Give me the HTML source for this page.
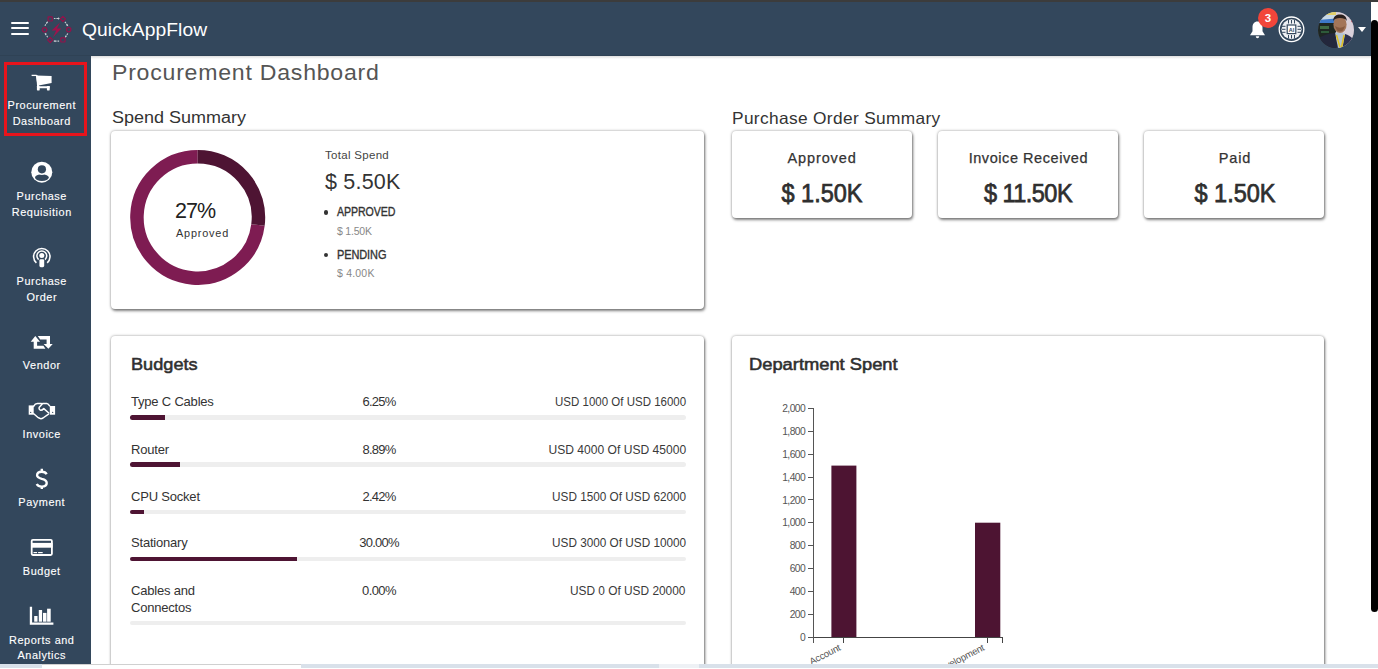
<!DOCTYPE html>
<html><head><meta charset="utf-8">
<style>
*{box-sizing:border-box;margin:0;padding:0}
html,body{width:1378px;height:669px;overflow:hidden;background:#fff;font-family:"Liberation Sans",sans-serif;position:relative}
.a{position:absolute}
.t{position:absolute;white-space:nowrap;line-height:1}
.card{position:absolute;background:#fff;border-radius:4px;box-shadow:0 0 3px rgba(0,0,0,.38),1px 2px 3px rgba(0,0,0,.45)}
svg{position:absolute;overflow:visible}
</style></head><body>
<div class="a" style="left:0;top:0;width:1378px;height:2px;background:#3c3c3c"></div>
<div class="a" style="left:0;top:2px;width:1371px;height:54px;background:#33475c;border-bottom:1px solid #2f4255"></div>
<div class="a" style="left:91px;top:56px;width:1280px;height:3px;background:linear-gradient(rgba(0,0,0,.13),rgba(0,0,0,0))"></div>
<div class="a" style="left:0;top:56px;width:91px;height:608px;background:#33475c"></div>
<div class="a" style="left:11px;top:21.7px;width:18.3px;height:2px;background:#fff;border-radius:1px"></div>
<div class="a" style="left:11px;top:27.3px;width:18.3px;height:2px;background:#fff;border-radius:1px"></div>
<div class="a" style="left:11px;top:33.2px;width:18.3px;height:2px;background:#fff;border-radius:1px"></div>
<div class="t" style="top:20.66px;font-size:18.5px;color:#fff;transform:scaleX(1.04);transform-origin:0 0;letter-spacing:0.1px;left:82px;">QuickAppFlow</div>
<div class="a" style="left:4px;top:62px;width:83px;height:74px;border:3px solid #e8141c"></div>
<div class="t" style="top:99.87px;font-size:10.9px;color:#fff;letter-spacing:0.55px;left:-3.73px;width:91px;text-align:center;-webkit-text-stroke:0.12px #fff;">Procurement</div>
<div class="t" style="top:116.37px;font-size:10.9px;color:#fff;letter-spacing:0.55px;left:-3.73px;width:91px;text-align:center;-webkit-text-stroke:0.12px #fff;">Dashboard</div>
<div class="t" style="top:190.57px;font-size:10.9px;color:#fff;letter-spacing:0.55px;left:-3.73px;width:91px;text-align:center;-webkit-text-stroke:0.12px #fff;">Purchase</div>
<div class="t" style="top:207.27px;font-size:10.9px;color:#fff;letter-spacing:0.55px;left:-3.73px;width:91px;text-align:center;-webkit-text-stroke:0.12px #fff;">Requisition</div>
<div class="t" style="top:275.57px;font-size:10.9px;color:#fff;letter-spacing:0.55px;left:-3.73px;width:91px;text-align:center;-webkit-text-stroke:0.12px #fff;">Purchase</div>
<div class="t" style="top:292.07px;font-size:10.9px;color:#fff;letter-spacing:0.55px;left:-3.73px;width:91px;text-align:center;-webkit-text-stroke:0.12px #fff;">Order</div>
<div class="t" style="top:360.07px;font-size:10.9px;color:#fff;letter-spacing:0.55px;left:-3.73px;width:91px;text-align:center;-webkit-text-stroke:0.12px #fff;">Vendor</div>
<div class="t" style="top:429.07px;font-size:10.9px;color:#fff;letter-spacing:0.55px;left:-3.73px;width:91px;text-align:center;-webkit-text-stroke:0.12px #fff;">Invoice</div>
<div class="t" style="top:497.27px;font-size:10.9px;color:#fff;letter-spacing:0.55px;left:-3.73px;width:91px;text-align:center;-webkit-text-stroke:0.12px #fff;">Payment</div>
<div class="t" style="top:565.87px;font-size:10.9px;color:#fff;letter-spacing:0.55px;left:-3.73px;width:91px;text-align:center;-webkit-text-stroke:0.12px #fff;">Budget</div>
<div class="t" style="top:634.57px;font-size:10.9px;color:#fff;letter-spacing:0.55px;left:-3.73px;width:91px;text-align:center;-webkit-text-stroke:0.12px #fff;">Reports and</div>
<div class="t" style="top:650.27px;font-size:10.9px;color:#fff;letter-spacing:0.55px;left:-3.73px;width:91px;text-align:center;-webkit-text-stroke:0.12px #fff;">Analytics</div>
<svg style="left:0;top:0" width="1378" height="669"><path d="M31.6 75.4H36.6" stroke="#fff" stroke-width="1.3" fill="none"/><path d="M36.3 75.6L51.6 76V82.9L38.6 85.5L37.9 86.3H49.7V88.2H37.2z" fill="#fff"/><path d="M36.6 75.2L38.4 86" stroke="#fff" stroke-width="1.6" fill="none"/><rect x="36.9" y="86" width="2.8" height="4.4" rx="0.6" fill="#fff"/><rect x="46.9" y="86" width="2.8" height="4.4" rx="0.6" fill="#fff"/><circle cx="41.8" cy="172.2" r="10.5" fill="#fff"/><ellipse cx="41.9" cy="177.6" rx="6.9" ry="3.3" fill="#33475c"/><circle cx="41.9" cy="169.3" r="5.6" fill="#fff"/><circle cx="41.9" cy="169.3" r="4.1" fill="#33475c"/><path d="M36.4 262.8A8.2 8.2 0 1 1 47.2 262.8" fill="none" stroke="#fff" stroke-width="1.6"/><path d="M38.6 259.6A4.9 4.9 0 1 1 45 259.6" fill="none" stroke="#fff" stroke-width="1.5"/><circle cx="41.8" cy="255.6" r="2.5" fill="#fff"/><rect x="39.4" y="259.2" width="4.8" height="8" rx="1.4" fill="#fff"/><path d="M30.7 341.7L35.3 335.9L40 341.7H37.1V345.8H43.4L45.4 348.8H33.7V341.7Z" fill="#fff"/><path d="M52.7 343.9L48.4 348.8L43.6 343.9H46.6V339.5H40.2L37.8 336.1H50V343.9Z" fill="#fff"/><rect x="28.7" y="405.4" width="5" height="9.3" fill="#fff"/><rect x="49.8" y="406" width="5.3" height="8.7" fill="#fff"/><circle cx="30.7" cy="412.4" r="0.6" fill="#33475c"/><circle cx="52.7" cy="412.4" r="0.6" fill="#33475c"/><g fill="none" stroke="#fff" stroke-width="1.5" stroke-linejoin="round" stroke-linecap="round"><path d="M33.6 406.4C34.6 404.6 35.6 403.6 37.4 403.6H41.4"/><path d="M42 404.2L39.3 407.2C38.7 408.2 39.2 409.9 40.6 410.2C41.6 410.4 42.6 409.8 43.8 408.6L48.8 413"/><path d="M41.6 403.8L43.2 403.5H46.8C47.9 403.5 48.6 404.3 49.6 405.8"/><path d="M33.7 413.8L38.3 417.7C39.8 418.8 41.6 418.9 43 418L48.5 414.2"/></g><g fill="none" stroke="#fff" stroke-width="2.4"><path d="M46.6 474.2C45.8 472.5 44 471.7 41.8 471.7C39 471.7 37.1 473.2 37.1 475.3C37.1 477.5 39.3 478.2 41.8 478.9C44.6 479.6 46.7 480.6 46.7 483C46.7 485.3 44.6 486.6 41.8 486.6C39.4 486.6 37.6 485.6 36.7 484"/><path d="M41.8 468.7V471.8M41.8 486.4V489.1"/></g><rect x="31.7" y="539.8" width="20.2" height="15.2" rx="1.2" fill="none" stroke="#fff" stroke-width="1.8"/><rect x="31" y="542.9" width="21.6" height="4.8" fill="#fff"/><rect x="33.5" y="552" width="3.6" height="1.2" fill="#fff"/><rect x="38.1" y="552" width="4.6" height="1.2" fill="#fff"/><path d="M29.8 606.8H32.1V622.6H53.4V624.8H29.8z" fill="#fff"/><rect x="34.2" y="616" width="3.3" height="5.7" fill="#fff"/><rect x="38.8" y="610" width="3.3" height="11.7" fill="#fff"/><rect x="43" y="612.9" width="3.5" height="8.8" fill="#fff"/><rect x="47.1" y="608.7" width="3.6" height="13.0" fill="#fff"/><g fill="none" stroke="#c8ccd2" stroke-width="1.1" stroke-dasharray="1.6 0.9"><path d="M53.9 18.5H58.4M64.9 21.8L67.6 25.4M67.8 33.5L65.4 37M59.1 41.1H54.6M47.7 37.2L45.1 33.6M44.9 25.7L47.4 22"/></g><g fill="#c8ccd2"><path d="M59.9 18.5l-1.9-1.2v2.4z"/><path d="M68.3 26.3l-2.1-.6 1.5-1.4z"/><path d="M64.9 37.7l.2-2.1 1.7 1.1z"/><path d="M53.3 41.1l1.9-1.2v2.4z"/><path d="M44.6 32.9l2.1.5-1.5 1.5z"/><path d="M47.9 21.2l-.2 2.1-1.7-1.1z"/></g><g fill="none" stroke="#94124a" stroke-width="1.2"><rect x="48.1" y="16.8" width="4.2" height="4.2" rx="0.4"/><path d="M62.9 16.3L65.5 18.9L62.9 21.5L60.3 18.9Z" stroke-linejoin="round"/><circle cx="68.7" cy="29.6" r="2.2"/><rect x="60.8" y="37.8" width="4.2" height="4.2" rx="0.4"/><path d="M50.2 37.3L52.8 39.9L50.2 42.5L47.6 39.9Z" stroke-linejoin="round"/><circle cx="44.6" cy="29.8" r="2.2"/></g><path d="M60 22.6L51.7 30.4H56.2L53 37.2L61.4 28.6H56.9Z" fill="#a0124c"/></svg>
<svg style="left:1249px;top:20px" width="17" height="19" viewBox="0 0 17 19"><path d="M8.5 1.5c-3.3 0-5 2.6-5 5.8v3.9L1 15.2h15l-2.5-4V7.3c0-3.2-1.7-5.8-5-5.8z" fill="#fff"/><path d="M6.8 16.2h3.4c0 1.2-.8 2-1.7 2s-1.7-.8-1.7-2z" fill="#fff"/></svg>
<div class="a" style="left:1258px;top:8.4px;width:20px;height:20px;border-radius:50%;background:#f2453a"></div>
<div class="t" style="left:1258px;top:12.5px;width:20px;text-align:center;font-size:11.5px;font-weight:bold;color:#fff">3</div>
<svg style="left:1278px;top:16px" width="27" height="27" viewBox="0 0 27 27"><circle cx="13.5" cy="13.3" r="12.3" fill="none" stroke="#fff" stroke-width="1.3"/><circle cx="13.5" cy="13.3" r="10" fill="#eef0f3"/><rect x="8.6" y="8.4" width="9.8" height="9.8" fill="#33475c"/><rect x="9.8" y="9.6" width="7.4" height="7.4" fill="#fff"/><g stroke="#33475c" stroke-width="1"><path d="M10.5 4v3.5M13.5 4v3.5M16.5 4v3.5M10.5 19v3.5M13.5 19v3.5M16.5 19v3.5M4 10.3h3.5M4 13.3h3.5M4 16.3h3.5M19.5 10.3h3.5M19.5 13.3h3.5M19.5 16.3h3.5"/></g><text x="13.5" y="15.6" font-family="Liberation Sans" font-size="5.5" font-weight="bold" fill="#33475c" text-anchor="middle">AI</text></svg>
<svg style="left:1318px;top:11.8px" width="36" height="36" viewBox="0 0 36 36"><defs><clipPath id="av"><circle cx="18" cy="18" r="18"/></clipPath></defs><g clip-path="url(#av)"><rect width="36" height="36" fill="#5a5c66"/><rect x="0" y="0" width="18" height="10" fill="#c9d9e6"/><rect x="6" y="0" width="12" height="3" fill="#e2cf6a"/><path d="M0 8L18 6.5V11H0z" fill="#3d78c8"/><rect x="0" y="11" width="18" height="25" fill="#1e2622"/><rect x="2" y="14" width="9" height="3" fill="#3f6a44"/><rect x="3" y="19" width="8" height="2" fill="#2e5a3a"/><rect x="18" y="0" width="18" height="36" fill="#d9d0da"/><circle cx="34.5" cy="9" r="1.4" fill="#c03a4a"/><ellipse cx="22" cy="12.5" rx="6.6" ry="8.6" fill="#a37559"/><path d="M15.2 9C15.2 4 18.5 2.5 22 2.5S28.8 4 28.8 9C27.5 6.8 25.5 6 22 6S16.5 6.8 15.2 9z" fill="#2a1f1c"/><path d="M17 14Q22 17.5 27 14Q25.5 19.5 22 19.5Q18.5 19.5 17 14z" fill="#86593f"/><path d="M0 36V27C4 23 11 21.5 17 21L21 36z" fill="#23273c"/><path d="M36 36V28C33 24.5 30 22.5 27 22L23 36z" fill="#2c3150"/><path d="M17 20.5L27 21.5L24.5 36H20z" fill="#b4c3d2"/><path d="M18.5 23L22 35.5M26 23L23.5 35.5" stroke="#e0c020" stroke-width="1.5"/></g></svg>
<svg style="left:1358px;top:27px" width="8" height="5" viewBox="0 0 8 5"><path d="M0 0h8L4 5z" fill="#fff"/></svg>
<div class="t" style="top:61.64px;font-size:21.2px;color:#555;transform:scaleX(1.09);transform-origin:0 0;letter-spacing:0.7px;left:112px;">Procurement Dashboard</div>
<div class="t" style="top:109.25px;font-size:17.3px;color:#333;transform:scaleX(1.041);transform-origin:0 0;left:112px;">Spend Summary</div>
<div class="t" style="top:109.78px;font-size:16.5px;color:#333;transform:scaleX(1.05);transform-origin:0 0;letter-spacing:0.32px;left:732px;">Purchase Order Summary</div>
<div class="card" style="left:111px;top:131px;width:593px;height:178px"></div>
<div class="card" style="left:732px;top:131px;width:180px;height:87px"></div>
<div class="card" style="left:938px;top:131px;width:180px;height:87px"></div>
<div class="card" style="left:1144px;top:131px;width:180px;height:87px"></div>
<div class="card" style="left:111px;top:336px;width:593px;height:360px"></div>
<div class="card" style="left:732px;top:336px;width:592px;height:360px"></div>
<svg style="left:0;top:0" width="1378" height="669"><path d="M257.97 225.01A60.75 60.75 0 1 1 197.70 156.65" fill="none" stroke="#7e1c52" stroke-width="13.5"/><path d="M197.70 156.65A60.75 60.75 0 0 1 257.97 225.01" fill="none" stroke="#4e1433" stroke-width="13.5"/></svg>
<div class="t" style="top:200.99px;font-size:21.5px;color:#222;letter-spacing:-1.0px;left:175px;">27%</div>
<div class="t" style="top:227.77px;font-size:10.9px;color:#333;letter-spacing:0.8px;left:176px;">Approved</div>
<div class="t" style="top:150.17px;font-size:11.5px;color:#444;letter-spacing:0.3px;left:325px;">Total Spend</div>
<div class="t" style="top:171.79px;font-size:21.5px;color:#333;transform:scaleX(1.0);transform-origin:0 0;letter-spacing:0.2px;left:325px;">$ 5.50K</div>
<div class="a" style="left:323.9px;top:210.2px;width:4.6px;height:4.6px;border-radius:50%;background:#333"></div>
<div class="a" style="left:323.9px;top:252.5px;width:4.6px;height:4.6px;border-radius:50%;background:#333"></div>
<div class="t" style="top:206.26px;font-size:12.2px;color:#333;transform:scaleX(0.87);transform-origin:0 0;letter-spacing:-0.1px;left:337px;-webkit-text-stroke:0.35px #333;">APPROVED</div>
<div class="t" style="top:225.73px;font-size:10.5px;color:#888;letter-spacing:-0.2px;left:337px;">$ 1.50K</div>
<div class="t" style="top:248.76px;font-size:12.2px;color:#333;transform:scaleX(0.9);transform-origin:0 0;letter-spacing:-0.1px;left:337px;-webkit-text-stroke:0.35px #333;">PENDING</div>
<div class="t" style="top:268.33px;font-size:10.5px;color:#888;letter-spacing:0.2px;left:337px;">$ 4.00K</div>
<div class="t" style="top:150.80px;font-size:14.5px;color:#333;letter-spacing:0.8800000000000001px;left:732.05px;width:180px;text-align:center;-webkit-text-stroke:0.25px #333;">Approved</div>
<div class="t" style="top:180.07px;font-size:26px;color:#2f2f2f;transform:scaleX(0.905);transform-origin:50% 0;left:731.50px;width:180px;text-align:center;-webkit-text-stroke:0.75px #2f2f2f;">$ 1.50K</div>
<div class="t" style="top:150.80px;font-size:14.5px;color:#333;letter-spacing:0.5599999999999999px;left:938.35px;width:180px;text-align:center;-webkit-text-stroke:0.25px #333;">Invoice Received</div>
<div class="t" style="top:180.07px;font-size:26px;color:#2f2f2f;transform:scaleX(0.905);transform-origin:50% 0;letter-spacing:-0.6px;left:938.00px;width:180px;text-align:center;-webkit-text-stroke:0.75px #2f2f2f;">$ 11.50K</div>
<div class="t" style="top:150.80px;font-size:14.5px;color:#333;letter-spacing:0.8800000000000001px;left:1145.05px;width:180px;text-align:center;-webkit-text-stroke:0.25px #333;">Paid</div>
<div class="t" style="top:180.07px;font-size:26px;color:#2f2f2f;transform:scaleX(0.905);transform-origin:50% 0;left:1144.50px;width:180px;text-align:center;-webkit-text-stroke:0.75px #2f2f2f;">$ 1.50K</div>
<div class="t" style="top:356.05px;font-size:17.3px;color:#2f2f2f;transform:scaleX(1.05);transform-origin:0 0;left:130.5px;-webkit-text-stroke:0.55px #2f2f2f;">Budgets</div>
<div class="t" style="top:395.24px;font-size:13px;color:#333;letter-spacing:-0.2px;left:131px;">Type C Cables</div>
<div class="t" style="top:395.24px;font-size:13px;color:#333;letter-spacing:-0.8px;left:329.00px;width:100px;text-align:center;">6.25%</div>
<div class="t" style="top:395.24px;font-size:13px;color:#3a3a3a;transform:scaleX(0.885);transform-origin:100% 0;right:692.2px;text-align:right;">USD 1000 Of USD 16000</div>
<div class="a" style="left:130px;top:415.2px;width:556px;height:4.5px;border-radius:3px;background:#eeeeee"></div>
<div class="a" style="left:130px;top:415.2px;width:35.1px;height:4.5px;border-radius:3px 0 0 3px;background:#4e1433"></div>
<div class="t" style="top:442.74px;font-size:13px;color:#333;letter-spacing:-0.2px;left:131px;">Router</div>
<div class="t" style="top:442.74px;font-size:13px;color:#333;letter-spacing:-0.8px;left:329.00px;width:100px;text-align:center;">8.89%</div>
<div class="t" style="top:442.74px;font-size:13px;color:#3a3a3a;transform:scaleX(0.929);transform-origin:100% 0;right:692.2px;text-align:right;">USD 4000 Of USD 45000</div>
<div class="a" style="left:130px;top:462.3px;width:556px;height:4.5px;border-radius:3px;background:#eeeeee"></div>
<div class="a" style="left:130px;top:462.3px;width:49.7px;height:4.5px;border-radius:3px 0 0 3px;background:#4e1433"></div>
<div class="t" style="top:489.84px;font-size:13px;color:#333;letter-spacing:-0.2px;left:131px;">CPU Socket</div>
<div class="t" style="top:489.84px;font-size:13px;color:#333;letter-spacing:-0.8px;left:329.00px;width:100px;text-align:center;">2.42%</div>
<div class="t" style="top:489.84px;font-size:13px;color:#3a3a3a;transform:scaleX(0.905);transform-origin:100% 0;right:692.2px;text-align:right;">USD 1500 Of USD 62000</div>
<div class="a" style="left:130px;top:509.7px;width:556px;height:4.5px;border-radius:3px;background:#eeeeee"></div>
<div class="a" style="left:130px;top:509.7px;width:14.0px;height:4.5px;border-radius:3px 0 0 3px;background:#4e1433"></div>
<div class="t" style="top:536.44px;font-size:13px;color:#333;letter-spacing:-0.2px;left:131px;">Stationary</div>
<div class="t" style="top:536.44px;font-size:13px;color:#333;letter-spacing:-0.8px;left:329.00px;width:100px;text-align:center;">30.00%</div>
<div class="t" style="top:536.44px;font-size:13px;color:#3a3a3a;transform:scaleX(0.905);transform-origin:100% 0;right:692.2px;text-align:right;">USD 3000 Of USD 10000</div>
<div class="a" style="left:130px;top:556.8px;width:556px;height:4.5px;border-radius:3px;background:#eeeeee"></div>
<div class="a" style="left:130px;top:556.8px;width:167.1px;height:4.5px;border-radius:3px 0 0 3px;background:#4e1433"></div>
<div class="t" style="top:583.84px;font-size:13px;color:#333;letter-spacing:-0.2px;left:131px;">Cables and</div>
<div class="t" style="top:600.94px;font-size:13px;color:#333;letter-spacing:-0.2px;left:131px;">Connectos</div>
<div class="t" style="top:583.84px;font-size:13px;color:#333;letter-spacing:-0.6px;left:329.00px;width:100px;text-align:center;">0.00%</div>
<div class="t" style="top:583.84px;font-size:13px;color:#3a3a3a;transform:scaleX(0.914);transform-origin:100% 0;right:692.2px;text-align:right;">USD 0 Of USD 20000</div>
<div class="a" style="left:130px;top:620.7px;width:556px;height:4.5px;border-radius:3px;background:#eeeeee"></div>
<div class="t" style="top:356.38px;font-size:16.5px;color:#2f2f2f;transform:scaleX(1.11);transform-origin:0 0;left:749.3px;-webkit-text-stroke:0.55px #2f2f2f;">Department Spent</div>
<svg style="left:0;top:0" width="1378" height="669"><g font-family="Liberation Sans" font-size="10.3" fill="#555" text-anchor="end" letter-spacing="-0.55"><line x1="807.5" y1="637.0" x2="813.5" y2="637.0" stroke="#555" stroke-width="1" shape-rendering="crispEdges"/><text x="805.2" y="640.7">0</text><line x1="807.5" y1="614.1" x2="813.5" y2="614.1" stroke="#555" stroke-width="1" shape-rendering="crispEdges"/><text x="805.2" y="617.8">200</text><line x1="807.5" y1="591.3" x2="813.5" y2="591.3" stroke="#555" stroke-width="1" shape-rendering="crispEdges"/><text x="805.2" y="595.0">400</text><line x1="807.5" y1="568.4" x2="813.5" y2="568.4" stroke="#555" stroke-width="1" shape-rendering="crispEdges"/><text x="805.2" y="572.1">600</text><line x1="807.5" y1="545.6" x2="813.5" y2="545.6" stroke="#555" stroke-width="1" shape-rendering="crispEdges"/><text x="805.2" y="549.3">800</text><line x1="807.5" y1="522.7" x2="813.5" y2="522.7" stroke="#555" stroke-width="1" shape-rendering="crispEdges"/><text x="805.2" y="526.4">1,000</text><line x1="807.5" y1="499.8" x2="813.5" y2="499.8" stroke="#555" stroke-width="1" shape-rendering="crispEdges"/><text x="805.2" y="503.5">1,200</text><line x1="807.5" y1="477.0" x2="813.5" y2="477.0" stroke="#555" stroke-width="1" shape-rendering="crispEdges"/><text x="805.2" y="480.7">1,400</text><line x1="807.5" y1="454.1" x2="813.5" y2="454.1" stroke="#555" stroke-width="1" shape-rendering="crispEdges"/><text x="805.2" y="457.8">1,600</text><line x1="807.5" y1="431.3" x2="813.5" y2="431.3" stroke="#555" stroke-width="1" shape-rendering="crispEdges"/><text x="805.2" y="435.0">1,800</text><line x1="807.5" y1="408.4" x2="813.5" y2="408.4" stroke="#555" stroke-width="1" shape-rendering="crispEdges"/><text x="805.2" y="412.1">2,000</text></g><line x1="813.5" y1="408.4" x2="813.5" y2="643.0" stroke="#555" stroke-width="1" shape-rendering="crispEdges"/><line x1="813.5" y1="637.0" x2="1002.5" y2="637.0" stroke="#444" stroke-width="1" shape-rendering="crispEdges"/><line x1="843.5" y1="637.0" x2="843.5" y2="643.0" stroke="#444" stroke-width="1" shape-rendering="crispEdges"/><line x1="987.5" y1="637.0" x2="987.5" y2="643.0" stroke="#444" stroke-width="1" shape-rendering="crispEdges"/><line x1="1002" y1="637.0" x2="1002" y2="643.0" stroke="#444" stroke-width="1" shape-rendering="crispEdges"/><rect x="831.4" y="465.6" width="25" height="171.4" fill="#4d1432"/><rect x="975" y="522.7" width="25.3" height="114.3" fill="#4d1432"/><g font-family="Liberation Sans" font-size="9.6" fill="#555" text-anchor="end" letter-spacing="-0.2"><text transform="translate(841.2 649.8) rotate(-27)">Account</text><text transform="translate(985 649.8) rotate(-27)">Development</text></g></svg>
<div class="a" style="left:1371px;top:20px;width:7px;height:592px;background:#000;border-radius:4px"></div>
<div class="a" style="left:0;top:664px;width:1378px;height:5px;background:#fff"></div>
<div class="a" style="left:0;top:664px;width:1378px;height:3.5px;background:#d9e1ea"></div>
<div class="a" style="left:42px;top:664px;width:259px;height:3.5px;background:#fff;border-top:1px solid #d0d0d0"></div>
<div class="a" style="left:659px;top:664px;width:40px;height:3.5px;background:#eef1f5"></div>
</body></html>
